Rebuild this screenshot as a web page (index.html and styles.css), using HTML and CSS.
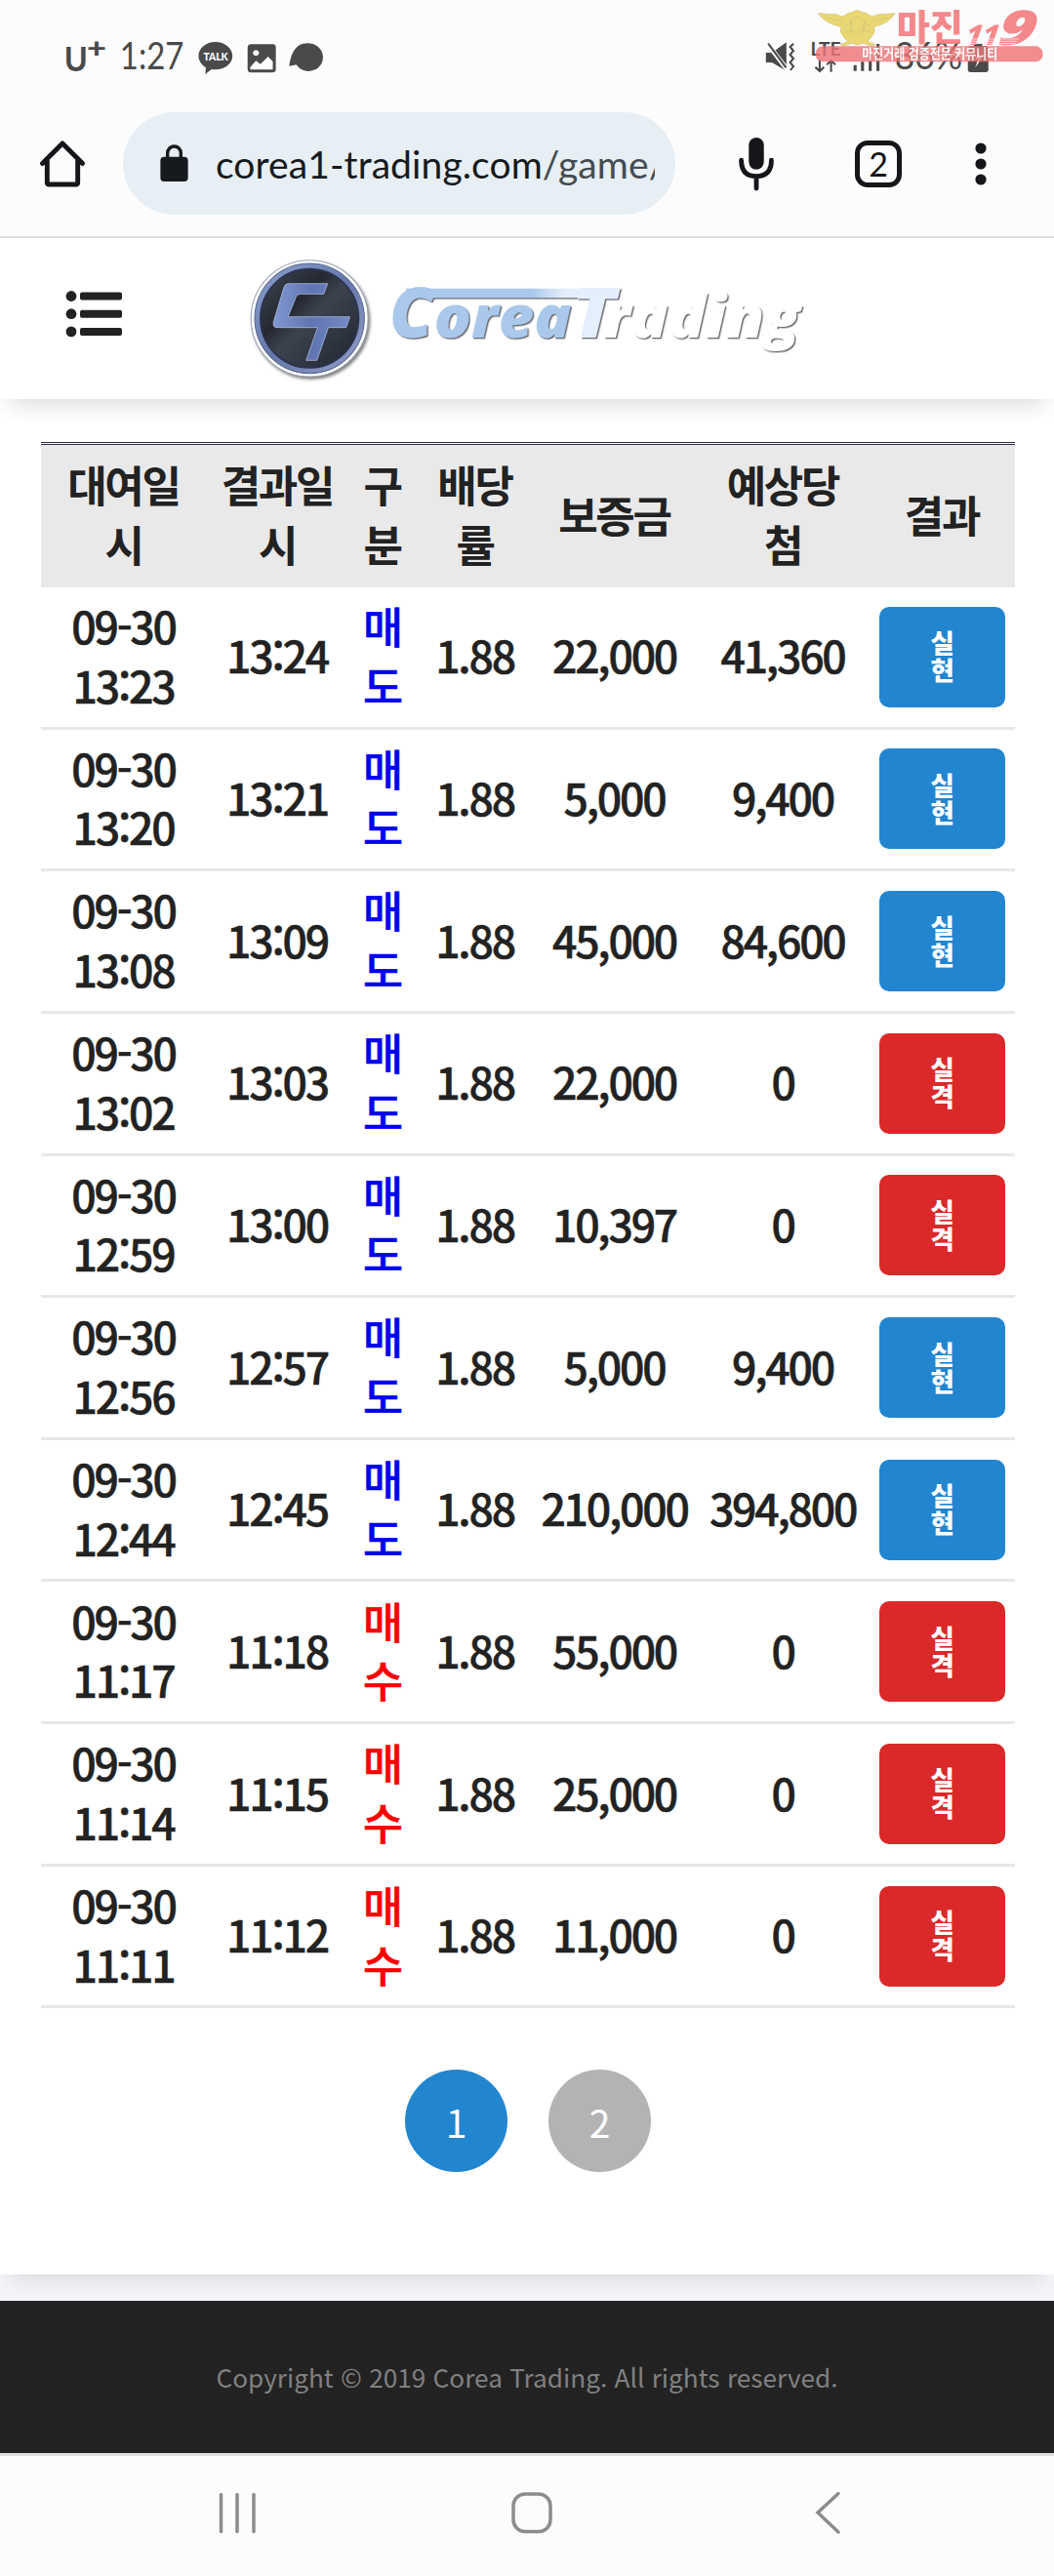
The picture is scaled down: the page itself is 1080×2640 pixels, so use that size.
FILE: index.html
```html
<!DOCTYPE html>
<html lang="ko">
  <head>
    <meta charset="UTF-8" />
    <meta name="viewport" content="width=device-width, initial-scale=1.0" />
    <title>Corea Trading</title>
    <link rel="stylesheet" href="styles.css" />
  </head>
  <body>
    <div class="browser">
      <div class="status">
        <svg class="status-left" viewBox="190 110 780 130" preserveAspectRatio="none">
          <g fill="#4a4a4a">
            <text x="192" y="217" class="carrier" textLength="70" lengthAdjust="spacingAndGlyphs">U</text>
            <text x="260" y="175" class="plus" textLength="58" lengthAdjust="spacingAndGlyphs">+</text>
            <text x="358" y="213" class="thin" textLength="190" lengthAdjust="spacingAndGlyphs">1:27</text>
            <path d="M642 128c28 0 51 19 51 43s-23 42-51 42c-4 0-8 0-11-1l-19 15 2-20c-13-8-22-21-22-36 0-24 22-43 50-43z" />
            <path fill-rule="evenodd" d="M748 135h64q10 0 10 10v67q0 10-10 10h-64q-10 0-10-10v-67q0-10 10-10zM746 205v8h67v-25l-14-15-23 23-13-10zM763 153a9 9 0 1 0 .1 0z" />
            <path d="M917 132a43 43 0 1 1-34 66l-21 4c4-28 13-70 55-70z" />
          </g>
          <text x="607" y="186" class="talk" textLength="73" lengthAdjust="spacingAndGlyphs">TALK</text>
        </svg>
        <svg class="status-right" viewBox="700 120 690 110" preserveAspectRatio="none">
          <g fill="#4a4a4a">
            <path d="M711 162h18l43-32v88l-43-26h-18z" />
            <path d="M714 132l62 84" stroke="#fcfcfc" stroke-width="14" />
            <path d="M718 134l53 74" stroke="#4a4a4a" stroke-width="6" />
            <path d="M793 134l-10 10 10 12-10 12 10 12-10 12 10 12-9 12" fill="none" stroke="#4a4a4a" stroke-width="6" />
            <text x="844" y="172" class="lte" textLength="90" lengthAdjust="spacingAndGlyphs">LTE</text>
            <path d="M871 184v34M858 206l13 13 13-13M905 221v-34M892 199l13-13 13 13" fill="none" stroke="#4a4a4a" stroke-width="6" />
            <path d="M972 200h9v18h-9zM994 190h9v28h-9zM1017 165h9v53h-9zM1040 135h9v83h-9z" />
            <text x="1094" y="213" class="thin" textLength="202" lengthAdjust="spacingAndGlyphs">86%</text>
            <path d="M1330 134h25v8h10q8 0 8 8v64q0 8-8 8h-45q-8 0-8-8v-64q0-8 8-8h10z" />
            <path d="M1350 155l-18 28h10l-8 25 20-30h-11z" fill="#fff" />
          </g>
        </svg>
      </div>

      <div class="toolbar">
        <svg class="icon-home" viewBox="0 0 48 50">
          <path d="M3 25L24 4l21 21M8 22v23q0 2 2 2h28q2 0 2-2V22" fill="none" stroke="#14161a" stroke-width="5" stroke-linecap="round" stroke-linejoin="round" />
        </svg>
        <div class="address">
          <svg class="icon-lock" viewBox="0 0 29 39">
            <path d="M7.500 15v-6a7 7 0 0 1 14 0v6" fill="none" stroke="#161a1d" stroke-width="3.500" />
            <rect y="13" width="29" height="26" rx="4" fill="#161a1d" />
          </svg>
          <div class="url">corea1-trading.com<span>/game/</span></div>
        </div>
        <svg class="icon-mic" viewBox="0 0 38 56">
          <rect x="11" y="0" width="16" height="34" rx="8" fill="#14161a" />
          <path d="M3 24q0 17 16 17t16-17M19 41v13" fill="none" stroke="#14161a" stroke-width="5" stroke-linecap="round" />
        </svg>
        <div class="tabs">2</div>
        <svg class="icon-more" viewBox="0 0 12 46">
          <g fill="#14161a">
            <circle cx="6" cy="7" r="5.600" />
            <circle cx="6" cy="23" r="5.600" />
            <circle cx="6" cy="39" r="5.600" />
          </g>
        </svg>
      </div>

      <svg class="watermark" viewBox="855 20 690 175" preserveAspectRatio="none">
        <g fill="#e8d564" stroke="#c9bd70" stroke-width="2">
          <path d="M868 40l58 4q10 10 22 2 6-8 20-9l16-7 16 7q14 1 20 9 12 8 22-2l54-4q-16 30-62 42 4 14-2 22-8 16-18 22l24 10-14 4-24-8-15 6-15-6-24 8-14-4 24-10q-10-6-18-22-6-8-2-22-50-12-68-42z" />
          <path d="M985 50l22 14-4 26-18 10-18-10-4-26zM945 80l22-10 0 28 18 14 18-14 0-28 22 10M890 54l50 10M1078 54l-50 10M948 98l19-6M1022 98l-19-6" fill="none" />
        </g>
        <rect x="860" y="141" width="676" height="48" rx="22" fill="#ee7476" fill-opacity=".9" />
        <g fill="#f47c7e">
          <text x="1101" y="126" class="mark-name" textLength="198" lengthAdjust="spacingAndGlyphs">마진</text>
          <text class="mark-11" transform="translate(1304 137) skewX(-8)" textLength="98" lengthAdjust="spacingAndGlyphs">11</text>
          <text class="mark-9" transform="translate(1396 137) skewX(-12)" textLength="112" lengthAdjust="spacingAndGlyphs">9</text>
        </g>
        <path d="M1305 119h160M1300 126h160M1296 133h160" stroke="#fcfcfc" stroke-width="2" />
        <text x="998" y="179" class="mark-sub" textLength="404" lengthAdjust="spacingAndGlyphs">마진거래 검증전문 커뮤니티</text>
      </svg>
    </div>

    <header class="header">
      <svg class="icon-menu" viewBox="0 0 60 50">
        <g fill="#222">
          <circle cx="6" cy="6.500" r="5.400" />
          <circle cx="6" cy="24.700" r="5.400" />
          <circle cx="6" cy="42.900" r="5.400" />
          <rect x="15" y="2.500" width="43" height="8" rx="2" />
          <rect x="15" y="20.700" width="43" height="8" rx="2" />
          <rect x="15" y="38.900" width="43" height="8" rx="2" />
        </g>
      </svg>
      <svg class="logo" viewBox="726 100 1742 390" preserveAspectRatio="none">
        <defs>
          <linearGradient id="ring" x1="0" y1="0" x2="1" y2="1">
            <stop offset="0" stop-color="#8fa3cf" />
            <stop offset=".5" stop-color="#6477ab" />
            <stop offset="1" stop-color="#98a0cc" />
          </linearGradient>
          <linearGradient id="disc" x1="0" y1="0" x2="1" y2="1">
            <stop offset="0" stop-color="#414a55" />
            <stop offset=".35" stop-color="#242831" />
            <stop offset=".5" stop-color="#3c424e" />
            <stop offset="1" stop-color="#1f2430" />
          </linearGradient>
          <linearGradient id="mark" x1="0" y1="0" x2="1" y2="0">
            <stop offset="0" stop-color="#8199d2" />
            <stop offset=".5" stop-color="#5f74b2" />
            <stop offset="1" stop-color="#7489c6" />
          </linearGradient>
          <linearGradient id="bar" x1="0" y1="0" x2="1" y2="0">
            <stop offset="0" stop-color="#a9c8ec" />
            <stop offset=".6" stop-color="#a9c8ec" />
            <stop offset=".75" stop-color="#e2edfb" />
            <stop offset="1" stop-color="#e6f0ff" />
          </linearGradient>
        </defs>
        <g class="emblem">
          <ellipse cx="921" cy="287" rx="174" ry="179" fill="#fff" stroke="#9aa5b5" stroke-width="3" />
        </g>
        <ellipse cx="921" cy="287" rx="163" ry="169" fill="url(#ring)" stroke="#56648c" stroke-width="3" />
        <ellipse cx="921" cy="287" rx="146" ry="152" fill="url(#disc)" stroke="#2b3350" stroke-width="5" />
        <path d="M857 180h118l-12 32h-70q-9 0-12 9l-24 61h184l-11 33h-53l-34 101h-32l34-101H825q-15 0-11-18l30-103q4-14 13-14z" fill="url(#mark)" stroke="#b9c9ee" stroke-width="2" />
        <g class="wordmark" transform="matrix(.968 0 0 1 1127 120)">
          <text x="32" y="227" class="cap" fill="#a9c8ec" textLength="138" lengthAdjust="spacingAndGlyphs">C</text>
          <path d="M84 75h642l-9 29H84z" fill="url(#bar)" />
          <text x="170" y="227" class="low" fill="#a9c8ec" textLength="422" lengthAdjust="spacingAndGlyphs">orea</text>
          <text x="592" y="227" class="cap" fill="#e4eefd" textLength="136" lengthAdjust="spacingAndGlyphs">T</text>
          <text x="690" y="227" class="low" fill="#fff" textLength="604" lengthAdjust="spacingAndGlyphs">rading</text>
        </g>
      </svg>
    </header>

    <main class="content">
      <table class="history">
        <colgroup>
          <col class="c1" />
          <col class="c2" />
          <col class="c3" />
          <col class="c4" />
          <col class="c5" />
          <col class="c6" />
          <col class="c7" />
        </colgroup>
        <thead>
          <tr>
            <th>대여일<br />시</th>
            <th>결과일<br />시</th>
            <th>구<br />분</th>
            <th>배당<br />률</th>
            <th>보증금</th>
            <th>예상당<br />첨</th>
            <th>결과</th>
          </tr>
        </thead>
        <tbody>
          <tr>
            <td>09-30<br />13:23</td>
            <td>13:24</td>
            <td class="sell">매<br />도</td>
            <td>1.88</td>
            <td>22,000</td>
            <td>41,360</td>
            <td><span class="btn win">실<br />현</span></td>
          </tr>
          <tr>
            <td>09-30<br />13:20</td>
            <td>13:21</td>
            <td class="sell">매<br />도</td>
            <td>1.88</td>
            <td>5,000</td>
            <td>9,400</td>
            <td><span class="btn win">실<br />현</span></td>
          </tr>
          <tr>
            <td>09-30<br />13:08</td>
            <td>13:09</td>
            <td class="sell">매<br />도</td>
            <td>1.88</td>
            <td>45,000</td>
            <td>84,600</td>
            <td><span class="btn win">실<br />현</span></td>
          </tr>
          <tr>
            <td>09-30<br />13:02</td>
            <td>13:03</td>
            <td class="sell">매<br />도</td>
            <td>1.88</td>
            <td>22,000</td>
            <td>0</td>
            <td><span class="btn lose">실<br />격</span></td>
          </tr>
          <tr>
            <td>09-30<br />12:59</td>
            <td>13:00</td>
            <td class="sell">매<br />도</td>
            <td>1.88</td>
            <td>10,397</td>
            <td>0</td>
            <td><span class="btn lose">실<br />격</span></td>
          </tr>
          <tr>
            <td>09-30<br />12:56</td>
            <td>12:57</td>
            <td class="sell">매<br />도</td>
            <td>1.88</td>
            <td>5,000</td>
            <td>9,400</td>
            <td><span class="btn win">실<br />현</span></td>
          </tr>
          <tr>
            <td>09-30<br />12:44</td>
            <td>12:45</td>
            <td class="sell">매<br />도</td>
            <td>1.88</td>
            <td>210,000</td>
            <td>394,800</td>
            <td><span class="btn win">실<br />현</span></td>
          </tr>
          <tr>
            <td>09-30<br />11:17</td>
            <td>11:18</td>
            <td class="buy">매<br />수</td>
            <td>1.88</td>
            <td>55,000</td>
            <td>0</td>
            <td><span class="btn lose">실<br />격</span></td>
          </tr>
          <tr>
            <td>09-30<br />11:14</td>
            <td>11:15</td>
            <td class="buy">매<br />수</td>
            <td>1.88</td>
            <td>25,000</td>
            <td>0</td>
            <td><span class="btn lose">실<br />격</span></td>
          </tr>
          <tr>
            <td>09-30<br />11:11</td>
            <td>11:12</td>
            <td class="buy">매<br />수</td>
            <td>1.88</td>
            <td>11,000</td>
            <td>0</td>
            <td><span class="btn lose">실<br />격</span></td>
          </tr>
        </tbody>
      </table>

      <div class="paging">
        <a class="on">1</a>
        <a>2</a>
      </div>
    </main>

    <footer class="footer">
      <p>Copyright © 2019 Corea Trading. All rights reserved.</p>
    </footer>

    <nav class="navbar">
      <svg viewBox="0 0 1080 123">
        <g fill="none" stroke="#8c8c8c" stroke-width="3.500" stroke-linecap="round">
          <path d="M226.500 39.500v38M243 39.500v38M260 39.500v38" />
          <rect x="526" y="39" width="38" height="38.500" rx="12" />
          <path d="M859 38.500L838 58l21 20" />
        </g>
      </svg>
    </nav>
  </body>
</html>
```

FILE: styles.css
```css
* {
  padding: 0;
  margin: 0;
  box-sizing: border-box;
}

body {
  width: 1080px;
  background: #f4f4f9;
  color: #222;
  font-family: "Noto Sans CJK KR", sans-serif;
}

svg {
  display: block;
  flex: none;
  overflow: visible;
}

/* browser */
.browser {
  position: relative;
  height: 244px;
  background: #fcfcfd;
  border-bottom: 2px solid #dedede;
}

.status {
  display: flex;
  justify-content: space-between;
  height: 115px;
  padding: 37px 61px 0 65px;
}

.status-left {
  width: 268.6px;
  height: 43.3px;
}

.status-right {
  width: 237.6px;
  height: 36.7px;
  margin-top: 3px;
}

.carrier {
  font: 700 104px Lato, sans-serif;
}

.plus {
  font: 900 84px Lato, sans-serif;
}

.thin {
  font: 400 114px Lato, sans-serif;
}

.talk {
  font: 900 36px Lato, sans-serif;
  fill: #fff;
}

.lte {
  font: 700 56px Lato, sans-serif;
}

.toolbar {
  display: flex;
  align-items: center;
  height: 105px;
  padding-left: 40px;
}

.icon-home {
  width: 48px;
  height: 49px;
}

.address {
  display: flex;
  align-items: center;
  width: 566px;
  height: 105px;
  margin-left: 38px;
  padding: 0 21px 0 38px;
  border-radius: 53px;
  background: #e7eef4;
}

.icon-lock {
  width: 29px;
  height: 38px;
  margin-right: 28px;
  margin-bottom: 2px;
}

.url {
  flex: 1;
  overflow: hidden;
  white-space: nowrap;
  color: #161a1d;
  font: 400 39px/50px Lato, sans-serif;
  letter-spacing: 0.1px;
}

.url span {
  color: #454c52;
}

.icon-mic {
  width: 38px;
  height: 54px;
  margin-left: 64px;
}

.tabs {
  width: 48px;
  height: 48px;
  margin-left: 82px;
  border: 5.500px solid #14161a;
  border-radius: 13px;
  color: #14161a;
  font: 400 34px/37px Lato, sans-serif;
  text-align: center;
}

.icon-more {
  width: 12px;
  height: 46px;
  margin-left: 75px;
}

.watermark {
  position: absolute;
  left: 834px;
  top: 7px;
  width: 237.6px;
  height: 58.3px;
  opacity: 0.9;
}

.mark-name {
  font: 900 112px "Noto Sans CJK KR", sans-serif;
}

.mark-11 {
  font: italic 800 86px "Open Sans", sans-serif;
}

.mark-9 {
  font: italic 800 148px "Open Sans", sans-serif;
}

.mark-sub {
  font: 700 40px "Noto Sans CJK KR", sans-serif;
  fill: #fff;
}

/* header */
.header {
  position: relative;
  display: flex;
  align-items: center;
  height: 165px;
  padding-left: 67px;
  background: #fff;
  box-shadow: 0 14px 22px -10px rgba(0, 0, 0, 0.16);
}

.icon-menu {
  width: 60px;
  height: 50px;
  margin-bottom: 10px;
}

.logo {
  width: 600px;
  height: 130px;
  margin: 4px 0 0 123px;
}

.emblem {
  filter: drop-shadow(5px 7px 5px rgba(0, 0, 0, 0.5));
}

.wordmark {
  filter: drop-shadow(4px 4px 2px rgba(60, 60, 70, 0.75));
}

.cap {
  font: italic 800 212px "Open Sans", sans-serif;
}

.low {
  font: italic 800 178px "Open Sans", sans-serif;
}

/* history */
.content {
  height: 1922px;
  padding: 44px 40px 0 42px;
  background: #fff;
  box-shadow: 0 14px 22px -10px rgba(0, 0, 0, 0.12);
}

.history {
  width: 998px;
  table-layout: fixed;
  border-collapse: separate;
  border-spacing: 0;
  border-top: 3px double #2d2d45;
  font-size: 44.6px;
  line-height: 60.7px;
  letter-spacing: -0.05em;
  text-align: center;
}

.c1 {
  width: 171px;
}

.c2 {
  width: 144px;
}

.c3 {
  width: 71px;
}

.c4 {
  width: 119px;
}

.c5 {
  width: 167px;
}

.c6 {
  width: 178px;
}

.c7 {
  width: 148px;
}

.history th {
  height: 146px;
  padding: 0 2px 4px 0;
  background: #e9e9e9;
  font-size: 44px;
  font-weight: 700;
}

.history td {
  height: 145.65px;
  padding: 0 2px 3px 0;
  border-bottom: 3px solid #e7e7e7;
  font-weight: 500;
  white-space: nowrap;
  -webkit-text-stroke: 0.5px currentColor;
}

.history td:last-child {
  padding: 0;
  -webkit-text-stroke: 0;
}

.history .sell {
  color: #0000f0;
}

.history .buy {
  color: #f80000;
}

.btn {
  display: flex;
  align-items: center;
  justify-content: center;
  width: 129px;
  height: 103px;
  margin-left: 9px;
  padding: 0 2px 2px 0;
  border-radius: 10px;
  color: #fff;
  font-size: 26.500px;
  font-weight: 900;
  line-height: 28px;
}

.win {
  background: #2185d0;
}

.lose {
  background: #db2828;
}

.paging {
  display: flex;
  justify-content: center;
  gap: 42px;
  margin-top: 63px;
}

.paging a {
  width: 105px;
  height: 105px;
  border-radius: 50%;
  background: #b3b3b3;
  color: #fff;
  font-size: 39px;
  font-weight: 400;
  line-height: 106px;
  text-align: center;
}

.paging .on {
  background: #2185d0;
}

/* footer */
.footer {
  height: 183px;
  border-top: 27px solid transparent;
  background: #222;
  background-clip: padding-box;
  color: #808080;
  font-size: 26.200px;
  line-height: 157px;
  text-align: center;
}

.navbar {
  height: 126px;
  border-top: 3px solid #e0e0e3;
  background: #fcfcfd;
}
```
